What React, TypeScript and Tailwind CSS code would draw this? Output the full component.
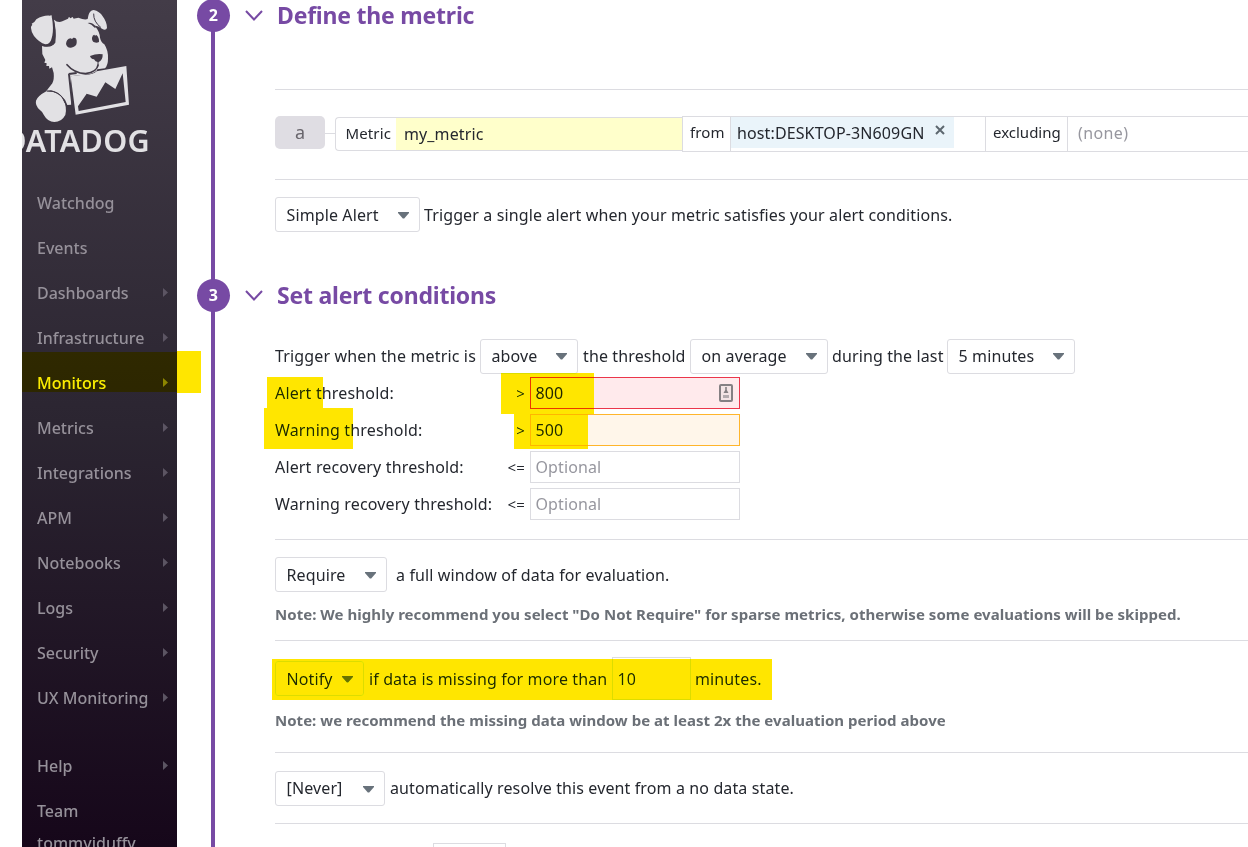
import React from "react";

const NAV: { label: string; arrow: boolean }[] = [
  { label: "Watchdog", arrow: false },
  { label: "Events", arrow: false },
  { label: "Dashboards", arrow: true },
  { label: "Infrastructure", arrow: true },
  { label: "Monitors", arrow: true },
  { label: "Metrics", arrow: true },
  { label: "Integrations", arrow: true },
  { label: "APM", arrow: true },
  { label: "Notebooks", arrow: true },
  { label: "Logs", arrow: true },
  { label: "Security", arrow: true },
  { label: "UX Monitoring", arrow: true },
];

function Logo() {
  return (
    <svg className="block h-[125px] w-[155px] shrink-0" viewBox="66 0 465 375">
      <g fill="#e2e1e4">
        <path d="M93 80 L97 74 L95 71 L103 66 L109 58 Q130 45 150 47 L154 45 Q159 54 158 70 Q161 98 154 118 Q150 133 136 133 Q118 128 102 108 Q94 98 93 84 Z" />
        <path d="M162 59 Q173 69 187 64 L204 56 L207 50 L211 55 L218 51 L221 56 L235 53 Q254 61 263 57 L265 47 Q268 32 281 30 Q298 33 309 50 Q321 66 321 84 Q317 93 306 86 Q294 76 284 77 Q299 94 300 113 Q303 127 313 133 Q325 151 324 176 Q324 195 315 205 L292 208 Q289 217 272 221 L213 229 L214 314 L202 315 Q190 280 153 271 L139 273 L157 250 Q163 238 161 219 L156 202 L148 206 L147 198 L139 198 L140 190 L133 188 L136 180 L127 162 L126 138 Q148 145 162 133 Q170 108 162 59 Z" />
        <path d="M139 274 Q171 272 189 297 Q202 321 196 345 Q185 366 163 366 Q143 366 132 346 Q128 335 119 329 Q105 316 108 302 Q113 288 139 274 Z" />
        <path fillRule="evenodd" d="M212 229 L249 224 Q278 226 290 214 L379 198 L387 314 L227 344 Z M234 319 L236 333 L377 306 L368 220 L346 267 L316 247 L290 290 L260 281 Z" />
      </g>
      <g fill="#413a46">
        <path d="M159 52 Q171 88 166 128 Q155 142 134 138 Q157 132 159 108 Q164 83 155 50 Z" />
        <path d="M198 132 Q199 117 212 115 L216 117 L220 113 Q232 112 230 129 Q229 140 213 143 Q201 144 198 132 Z" />
        <path d="M276 113 Q278 104 283 104 L285 107 L289 105 Q298 112 297 126 Q290 130 283 127 Q275 123 276 113 Z" />
        <path d="M270 168 Q290 160 308 163 Q309 181 295 187 Q285 185 282 178 Q272 177 270 168 Z" />
        <path d="M263 69 Q277 66 289 82 L284 83 Q275 73 263 69 Z" />
      </g>
      <g fill="none" stroke="#413a46" strokeLinecap="round">
        <path d="M201 194 Q222 219 257 221 Q291 216 294 195" strokeWidth="5" />
        <path d="M294 187 L294 198" strokeWidth="3" />
        <path d="M281 42 Q280 65 302 82" strokeWidth="3" />
        <path d="M206 222 L230 219 M207 222 L217 315" strokeWidth="6" strokeLinecap="butt" />
        <path d="M142 273 Q182 270 195 308" strokeWidth="3" />
      </g>
    </svg>
  );
}

function NavItem({ label, arrow }: { label: string; arrow: boolean }) {
  const active = label === "Monitors";
  return (
    <div className="flex h-[45px] shrink-0 items-center justify-between pl-[15px] pr-[9px]">
      <span className={active ? "font-medium text-white" : "font-medium text-[#96919a]"}>{label}</span>
      {arrow && (
        <svg className="h-[9px] w-[5px]" viewBox="0 0 5 9">
          <path d="M0 0 L5 4.5 L0 9 Z" fill={active ? "#8d8692" : "#5c5563"} />
        </svg>
      )}
    </div>
  );
}

function Select({ label, className }: { label: string; className: string }) {
  return (
    <div className={"flex h-[35px] shrink-0 items-center justify-between rounded-[3px] border border-[#dcdce1] bg-white pl-[10.5px] pr-[10px] " + className}>
      <span>{label}</span>
      <svg className="mt-[2px] h-[7px] w-[11px]" viewBox="0 0 11 7">
        <path d="M0 0 H11 V1 L6.2 6.5 H4.8 L0 1 Z" fill="#68727b" />
      </svg>
    </div>
  );
}

function Heading({ n, title }: { n: string; title: string }) {
  return (
    <div className="flex h-[33px] shrink-0 items-center">
      <div className="flex h-[33px] w-[33px] items-center justify-center rounded-full bg-[#774aa4] pb-px text-[16px] font-bold text-white">{n}</div>
      <svg className="ml-[15px] h-[11px] w-[18px]" viewBox="0 0 18 11">
        <path d="M1 1 L9 9.5 L17 1" fill="none" stroke="#774aa4" strokeWidth="2" />
      </svg>
      <h2 className="ml-[14px] pb-[2px] text-[23px] font-bold tracking-[-0.21px] text-[#774aa4]">{title}</h2>
    </div>
  );
}

function Threshold({ label, op, value, box, extra }: { label: string; op: string; value: string; box: string; extra?: React.ReactNode }) {
  return (
    <div className="mb-[5px] flex h-8 items-center">
      <span className="w-[222px] tracking-[0.16px]">{label}</span>
      <span className="w-[28px] text-right text-[15px]">{op}</span>
      <div className={"ml-[5px] flex h-8 w-[210px] items-center justify-between border pl-[4.5px] pr-[5px] " + box}>
        <span>{value}</span>
        {extra}
      </div>
    </div>
  );
}

const HL = "pointer-events-none absolute bg-[#ffe600] mix-blend-darken ";

export default function App() {
  return (
    <div className="relative flex h-[847px] w-[1248px] overflow-hidden bg-white text-[16px] leading-[24px] text-[#24272e] [font-family:'Noto_Sans',sans-serif]">
      <aside className="ml-[22px] flex w-[155px] shrink-0 flex-col overflow-hidden bg-linear-to-b from-[#433c48] via-[#2b2531] to-[#16071a]">
        <Logo />
        <div className="-mt-px flex h-[56px] shrink-0 justify-end pr-[27px]">
          <span className="text-[30.5px] font-semibold leading-[33px] tracking-[0.3px] text-[#e2e1e4]">
            <span className="tracking-[-1px]">D</span>ATADOG
          </span>
        </div>
        {NAV.map((i) => (
          <NavItem key={i.label} {...i} />
        ))}
        <div className="h-[23px] shrink-0" />
        <NavItem label="Help" arrow />
        <NavItem label="Team" arrow={false} />
        <div className="-mt-[2px] h-6 shrink-0 pl-[15px] font-medium text-[#96919a]">tommyjduffy</div>
      </aside>

      <main className="relative ml-5 flex min-w-0 flex-1 flex-col tracking-[0.12px]">
        <div className="absolute left-[14px] top-0 h-full w-1 bg-[#774aa4]" />
        <div className="relative -mt-px flex flex-col">
          <Heading n="2" title="Define the metric" />
          <div className="ml-[78px] mt-[57px] flex h-[91px] items-start border-y border-[#dcdce1] pt-[26px]">
            <div className="flex h-[33px] w-[50px] shrink-0 items-center justify-center rounded-[5px] bg-[#dfdde3] pb-px text-[18px] text-[#68656c]">a</div>
            <div className="mt-[17px] h-px w-[10px] shrink-0 bg-[#dcdce1]" />
            <div className="mt-px flex h-[34px] w-[347px] shrink-0 rounded-l-[4px] border border-r-0 border-[#dcdce1]">
              <span className="flex w-[60px] items-center pb-[2px] pl-[9.5px] text-[15px]">Metric</span>
              <span className="flex flex-1 items-center bg-[#ffffcb] pl-[8px]">my_metric</span>
            </div>
            <div className="flex h-9 min-w-0 flex-1 border border-r-0 border-[#dcdce1]">
              <span className="flex w-[48px] shrink-0 items-center border-r border-[#dcdce1] pl-[7px] pb-[4px] text-[15px]">from</span>
              <div className="flex w-[255px] shrink-0 border-r border-[#dcdce1]">
                <div className="flex h-[31px] w-[223px] items-center bg-[#eaf4fa] pl-[6px]">
                  <span className="w-[187px] whitespace-nowrap">host:DESKTOP-3N609GN</span>
                  <svg className="-mt-[5px] ml-[11px] h-[10px] w-[10px]" viewBox="0 0 10 10">
                    <path d="M1 1 L9 9 M9 1 L1 9" stroke="#5d676f" strokeWidth="2" />
                  </svg>
                </div>
              </div>
              <span className="flex w-[82px] shrink-0 items-center border-r border-[#dcdce1] pl-[7px] pb-[4px] text-[15px] tracking-normal">excluding</span>
              <span className="flex items-center pb-[2px] pl-[10px] tracking-[0.4px] text-[#97979f]">(none)</span>
            </div>
          </div>
          <div className="ml-[78px] mt-[17px] flex items-center">
            <Select label="Simple Alert" className="w-[145px]" />
            <span className="ml-1">Trigger a single alert when your metric satisfies your alert conditions.</span>
          </div>
          <div className="mt-[47px]">
            <Heading n="3" title="Set alert conditions" />
          </div>

          <div className="ml-[78px] flex flex-col">
            <div className="mt-[27px] flex h-[35px] items-center whitespace-nowrap">
              <span className="w-[205px] pb-[2px] tracking-[0.16px]">Trigger when the metric is</span>
              <Select label="above" className="w-[98px] pb-[2px]" />
              <span className="w-[112px] pb-[2px] pl-[5px]">the threshold</span>
              <Select label="on average" className="w-[138px] pb-[2px]" />
              <span className="w-[119px] pb-[2px] pl-1">during the last</span>
              <Select label="5 minutes" className="w-[128px] pb-[2px]" />
            </div>
            <div className="mt-[3px] flex flex-col">
              <Threshold
                label="Alert threshold:"
                op=">"
                value="800"
                box="border-[#eb364b] bg-[#ffeaec]"
                extra={
                  <svg className="h-5 w-4" viewBox="0 0 16 20">
                    <rect x="2" y="2" width="12" height="16" rx="1" fill="#f3e4e5" stroke="#858083" strokeWidth="2" />
                    <path d="M7.2 4 H8.8 V7 L10.5 10 H5.5 L7.2 7 Z" fill="#858083" />
                    <path d="M5 12 H11 V15 H5 Z" fill="#b3abae" />
                  </svg>
                }
              />
              <Threshold label="Warning threshold:" op=">" value="500" box="border-[#ffb52b] bg-[#fff6ea]" />
              <Threshold label="Alert recovery threshold:" op="<=" value="Optional" box="border-[#dcdce1] text-[#97979f]" />
              <Threshold label="Warning recovery threshold:" op="<=" value="Optional" box="border-[#dcdce1] text-[#97979f]" />
            </div>

            <div className="mt-[14px] flex h-[101px] flex-col border-t border-[#dcdce1] pt-[17px]">
              <div className="flex items-center">
                <Select label="Require" className="w-[112px]" />
                <span className="ml-[9px]">a full window of data for evaluation.</span>
              </div>
              <p className="mt-[10px] whitespace-nowrap text-[15px] font-bold tracking-[0.035px] text-[#6b7077]">
                Note: We highly recommend you select "Do Not Require" for sparse metrics, otherwise some evaluations will be skipped.
              </p>
            </div>
            <div className="flex h-[112px] flex-col border-t border-[#dcdce1] pt-[16px]">
              <div className="flex h-[43px] items-center whitespace-nowrap">
                <Select label="Notify" className="w-[89px]" />
                <span className="w-[248px] pl-[5px]">if data is missing for more than</span>
                <span className="flex h-[43px] w-[79px] items-center border border-[#dcdce1] pl-[4.5px]">10</span>
                <span className="ml-[4px]">minutes.</span>
              </div>
              <p className="mt-[8px] whitespace-nowrap text-[15px] font-bold tracking-[0.02px] text-[#6b7077]">
                Note: we recommend the missing data window be at least 2x the evaluation period above
              </p>
            </div>
            <div className="flex h-[71px] items-start border-t border-[#dcdce1] pt-[18px]">
              <Select label="[Never]" className="w-[110px] pb-px" />
              <span className="ml-[5px] mt-[5px]">automatically resolve this event from a no data state.</span>
            </div>
            <div className="h-[24px] border-t border-[#dcdce1] pl-[158px] pt-[19px]">
              <div className="h-10 w-[73px] border border-[#dcdce1]" />
            </div>
          </div>
        </div>
      </main>

      <div className={HL + "left-[22px] top-[352px] h-[40px] w-[155px]"} />
      <div className={HL + "left-[177px] top-[351px] h-[42px] w-[24px]"} />
      <div className={HL + "left-[267px] top-[377px] h-[31px] w-[56px]"} />
      <div className={HL + "left-[264px] top-[408px] h-[41px] w-[89px]"} />
      <div className={HL + "left-[501px] top-[373px] h-[41px] w-[93px]"} />
      <div className={HL + "left-[514px] top-[414px] h-[35px] w-[74px]"} />
      <div className={HL + "left-[272px] top-[659px] h-[41px] w-[500px]"} />
    </div>
  );
}
